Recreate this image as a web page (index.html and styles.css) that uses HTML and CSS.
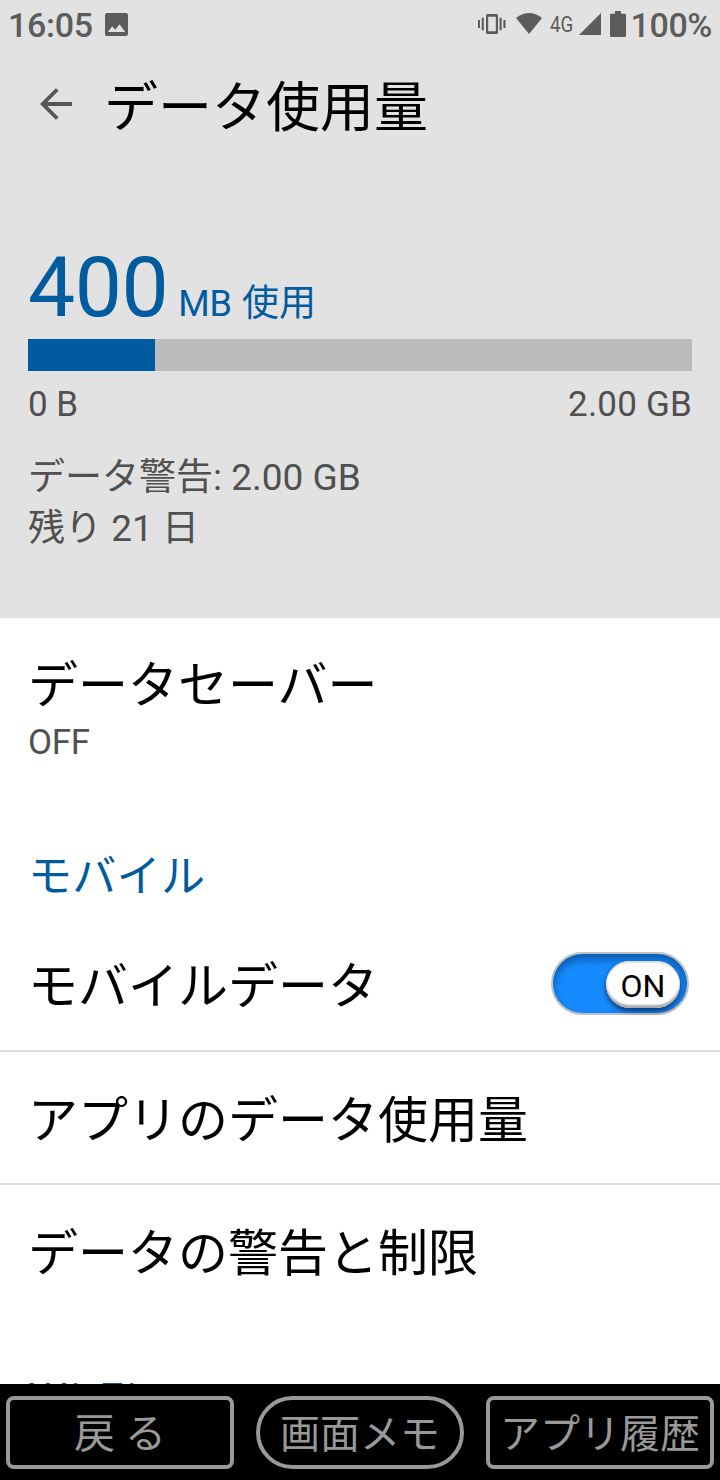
FILE: index.html
```
<!DOCTYPE html>
<html lang="ja">
<head>
<meta charset="utf-8">
<title>データ使用量</title>
<link rel="stylesheet" href="styles.css">
</head>
<body>
<div class="screen">
  <header class="summary">
    <div class="status">
      <span class="clock">16:05</span>
      <svg class="picture" width="23" height="23" viewBox="0 0 23 23"><path fill="#5c5c5c" fill-rule="evenodd" d="M2 0h19a2 2 0 0 1 2 2v19a2 2 0 0 1-2 2H2a2 2 0 0 1-2-2V2a2 2 0 0 1 2-2zM7.200 13.200L2.800 19h17.400l-5.600-7.800-4.400 5.600z"/></svg>
      <span class="spacer"></span>
      <svg class="vibrate" width="28" height="20" viewBox="0 0 28 20"><path fill="#5c5c5c" fill-rule="evenodd" d="M0 6h2v8H0zM3.700 3.800h2.100v12.400H3.700zM21.500 3.800h2.200v12.400h-2.200zM25.400 6h2.200v8h-2.200zM9.500 0h9Q20 0 20 1.500v17q0 1.500-1.500 1.500h-9Q8 20 8 18.500v-17Q8 0 9.500 0zM10.200 2.800v14.400h7.600V2.800z"/></svg>
      <svg class="wifi" width="26" height="21" viewBox="0 0 26 21"><path fill="#5c5c5c" d="M0 5Q13-5 26 5L13 21z"/></svg>
      <span class="network">4G</span>
      <svg class="signal" width="22" height="22" viewBox="0 0 22 22"><path fill="#5c5c5c" d="M22 0v22H0z"/></svg>
      <svg class="battery" width="16" height="26" viewBox="0 0 16 26"><path fill="#5c5c5c" d="M5 0h6v2.800h3.800q1.200 0 1.200 1.200v20.800q0 1.200-1.200 1.200H1.200Q0 26 0 24.800V4q0-1.200 1.200-1.200H5z"/></svg>
      <span class="percent">100%</span>
    </div>
    <div class="titlebar">
      <svg class="back" width="32" height="32" viewBox="0 0 32 32"><path fill="none" stroke="#555" stroke-width="3.800" d="M32 16H3M17.200 1.500L2.700 16l14.500 14.500"/></svg>
      <h1 class="title">データ使用量</h1>
    </div>
    <div class="usage"><span class="amount">400</span><span class="unit">MB <span class="used">使用</span></span></div>
    <div class="meter"><div class="meter-fill"></div></div>
    <div class="range"><span>0 B</span><span class="limit">2.00 GB</span></div>
    <div class="notes"><div>データ警告: 2.00 GB</div><div>残り 21 日</div></div>
  </header>
  <main class="list">
    <div class="saver"><div class="label">データセーバー</div><div class="state">OFF</div></div>
    <div class="section">モバイル</div>
    <div class="row first"><span class="label">モバイルデータ</span><span class="switch"><span class="knob">ON</span></span></div>
    <div class="row"><span class="label">アプリのデータ使用量</span></div>
    <div class="row"><span class="label">データの警告と制限</span></div>
    <div class="section wifi-section">Wi-Fi</div>
  </main>
  <nav class="softkeys">
    <div class="key">戻 る</div><div class="key round">画面メモ</div><div class="key history">アプリ履歴</div>
  </nav>
</div>
</body>
</html>
```
FILE: styles.css
```
* { box-sizing: border-box; }
body { margin: 0; font-family: Roboto, "Noto Sans CJK JP", sans-serif; color: #000; }
.screen { width: 720px; height: 1480px; display: flex; flex-direction: column; overflow: hidden; background: #fff; }
.summary { height: 618px; flex: none; background: #e2e2e2; }
.status { height: 50px; padding: 0 8px 0 8px; display: flex; align-items: center; color: #5c5c5c; }
.clock, .percent { font-size: 34px; line-height: 50px; font-weight: 500; }
.clock { letter-spacing: -0.3px; }
.percent { letter-spacing: -0.4px; }
.picture { margin: 0 0 1px 12px; }
.spacer { flex: 1; }
.vibrate { margin-bottom: 2px; }
.wifi { margin: 0 0 3px 10px; }
.network { font-size: 22px; line-height: 50px; width: 23px; margin: 0 6px 0 8px; transform: scaleX(.85); transform-origin: left; }
.signal { margin-bottom: 2px; }
.battery { margin: 0 5px 2px 9px; }
.titlebar { height: 108px; display: flex; align-items: center; padding-left: 40px; }
.title { margin: 9px 0 0 32px; font-size: 54px; line-height: 80px; font-weight: 400; }
.usage { height: 100px; margin: 81px 28px 0; display: flex; align-items: baseline; color: #005b9f; line-height: 97px; }
.amount { font-size: 84px; letter-spacing: -0.5px; }
.unit { font-size: 36px; margin-left: 10px; }
.used { font-size: 37px; margin-left: 1px; }
.meter { height: 32px; margin: 0 28px; background: #bcbcbc; }
.meter-fill { width: 127px; height: 32px; background: #005b9f; }
.range { display: flex; justify-content: space-between; margin: 12px 28px 0; font-size: 35px; line-height: 44px; color: #505050; }
.limit { letter-spacing: 0.2px; }
.notes { margin: 25px 28px 0; font-size: 37px; line-height: 51px; color: #505050; }
.list { height: 766px; flex: none; overflow: hidden; }
.saver { height: 198px; padding: 32px 28px 0; }
.label { font-size: 50px; line-height: 74px; }
.saver .label { line-height: 72px; }
.state { font-size: 35px; line-height: 42px; color: #505050; letter-spacing: -0.3px; }
.section { height: 101px; padding: 33px 28px 0; font-size: 44px; line-height: 56px; letter-spacing: .3px; color: #005b9f; }
.row { height: 133px; padding: 7px 28px 0; display: flex; align-items: center; justify-content: space-between; border-top: 2px solid #ddd; }
.first { border-top: 0; padding: 6px 31px 0 28px; }
.wifi-section { padding-top: 56px; letter-spacing: 3px; }
.switch { width: 138px; height: 63px; margin-bottom: 6px; border-radius: 32px; background: #168bff; border: 2px solid #bfbfbf; box-shadow: inset 0 5px 8px rgba(0, 35, 80, .5); display: flex; align-items: center; justify-content: flex-end; padding: 1px 7px 0 0; }
.knob { width: 74px; height: 47px; border-radius: 24px; background: #fff; box-shadow: inset 0 2px 1px #ddd, inset 0 -3px 2px #aaa, 0 3px 5px rgba(0, 20, 50, .7); font-size: 32px; line-height: 50px; text-align: center; }
.softkeys { height: 96px; flex: none; background: #000; display: flex; justify-content: space-between; padding: 12px 6px; }
.key { width: 228px; height: 73px; border: 4px solid #999; border-radius: 8px; color: #999; font-size: 41px; line-height: 69px; text-align: center; white-space: nowrap; }
.round { width: 208px; border-radius: 37px; font-size: 40px; }
.history { font-size: 40px; }
```
